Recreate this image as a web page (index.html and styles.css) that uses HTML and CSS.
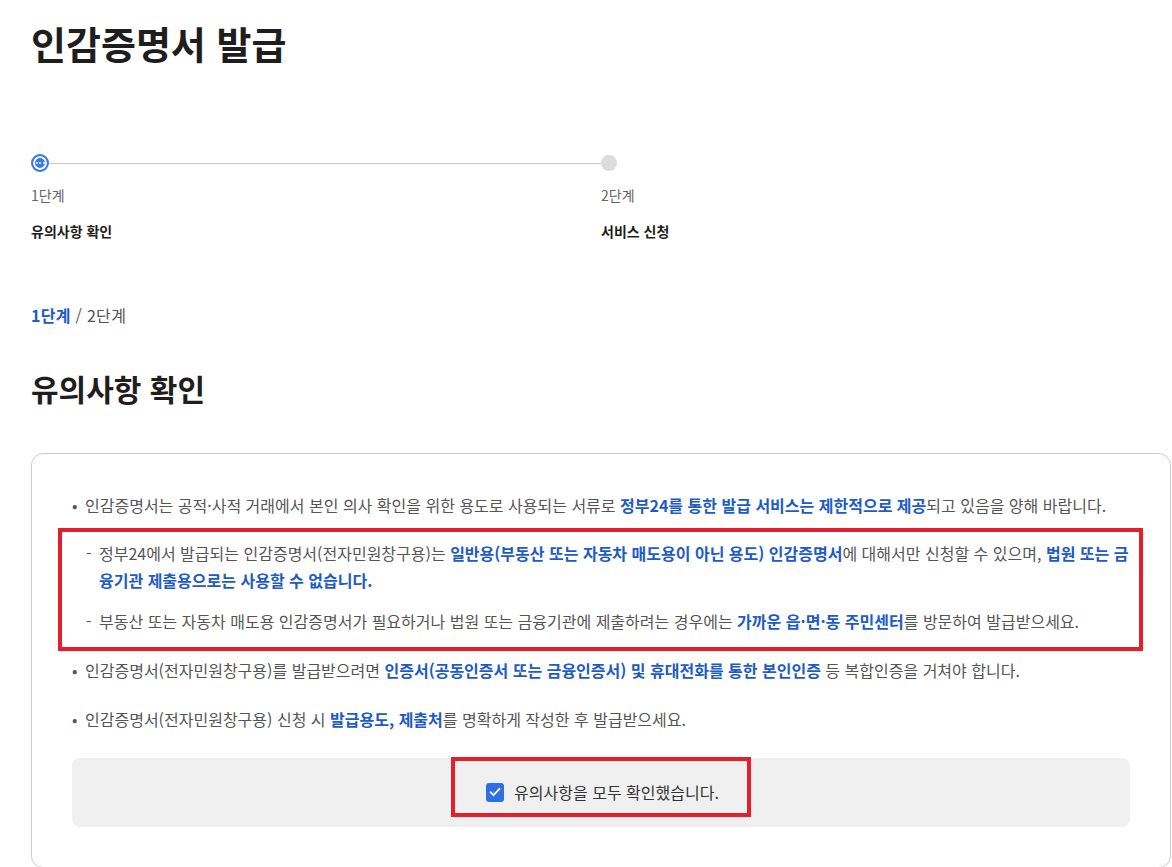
FILE: index.html
```html
<!DOCTYPE html>
<html lang="ko">
<head>
  <meta charset="UTF-8" />
  <meta name="viewport" content="width=device-width, initial-scale=1.0" />
  <title>인감증명서 발급</title>
  <link rel="stylesheet" href="styles.css">
</head>
<body>
  <div class="page">
    <h1 class="page-title">인감증명서 발급</h1>

    <div class="stepper">
      <div class="step current">
        <div class="step-track">
          <span class="step-dot"><i></i><i></i><i></i></span>
          <span class="step-line"></span>
        </div>
        <div class="step-num">1단계</div>
        <div class="step-name">유의사항 확인</div>
      </div>
      <div class="step">
        <div class="step-track">
          <span class="step-dot"></span>
        </div>
        <div class="step-num">2단계</div>
        <div class="step-name">서비스 신청</div>
      </div>
    </div>

    <div class="crumb"><strong>1단계</strong> / 2단계</div>

    <h2 class="section-title">유의사항 확인</h2>

    <div class="card">
      <div class="notes">
        <div class="note">
          <span class="mark">•</span>
          <p>인감증명서는 공적·사적 거래에서 본인 의사 확인을 위한 용도로 사용되는 서류로 <b>정부24를 통한 발급 서비스는 제한적으로 제공</b>되고 있음을 양해 바랍니다.</p>
        </div>
        <div class="sub-box">
          <div class="note">
            <span class="mark">-</span>
            <p>정부24에서 발급되는 인감증명서(전자민원창구용)는 <b>일반용(부동산 또는 자동차 매도용이 아닌 용도) 인감증명서</b>에 대해서만 신청할 수 있으며, <b>법원 또는 금융기관 제출용으로는 사용할 수 없습니다.</b></p>
          </div>
          <div class="note">
            <span class="mark">-</span>
            <p>부동산 또는 자동차 매도용 인감증명서가 필요하거나 법원 또는 금융기관에 제출하려는 경우에는 <b>가까운 읍·면·동 주민센터</b>를 방문하여 발급받으세요.</p>
          </div>
        </div>
        <div class="note">
          <span class="mark">•</span>
          <p>인감증명서(전자민원창구용)를 발급받으려면 <b>인증서(공동인증서 또는 금융인증서) 및 휴대전화를 통한 본인인증</b> 등 복합인증을 거쳐야 합니다.</p>
        </div>
        <div class="note">
          <span class="mark">•</span>
          <p>인감증명서(전자민원창구용) 신청 시 <b>발급용도, 제출처</b>를 명확하게 작성한 후 발급받으세요.</p>
        </div>
      </div>

      <div class="agree">
        <label class="agree-label">
          <span class="check">
            <svg width="12" height="10" viewBox="0 0 12 10"><path d="M1.5 5.2l3 3 6-6.4" fill="none" stroke="#fff" stroke-width="1.8" stroke-linecap="round" stroke-linejoin="round"/></svg>
          </span>
          유의사항을 모두 확인했습니다.
        </label>
      </div>
    </div>
  </div>
</body>
</html>
```

FILE: styles.css
```css
body {
  margin: 0;
  font-family: "Noto Sans CJK KR", "Noto Sans", sans-serif;
  color: #1e1e1e;
  background: #fff;
}
.page {
  width: 1140px;
  padding: 20px 0 0 31px;
}
.page-title {
  margin: 0;
  font-size: 38px;
  line-height: 46px;
  font-weight: 700;
}

/* stepper */
.stepper {
  display: flex;
  margin-top: 88px;
}
.step {
  flex: 1;
}
.step-track {
  display: flex;
  align-items: center;
  height: 18px;
}
.step-dot {
  width: 16px;
  height: 16px;
  border-radius: 50%;
  background: #dcdcdc;
  flex: none;
}
.current .step-dot {
  width: 12px;
  height: 12px;
  border: 2px solid #3a7be8;
  box-shadow: inset 0 0 0 2px #fff;
  background: #3a7be8;
  display: flex;
  align-items: center;
  justify-content: center;
  gap: 1.5px;
  padding: 1px;
}
.step-dot i {
  width: 2px;
  height: 2px;
  border-radius: 50%;
  background: #fff;
}
.step-line {
  flex: 1;
  height: 1px;
  background: #c8c8c8;
}
.step-num {
  margin-top: 13px;
  font-size: 14px;
  line-height: 20px;
  color: #666;
}
.step-name {
  margin-top: 16px;
  font-size: 14px;
  line-height: 20px;
  font-weight: 700;
  color: #1e1e1e;
}

.crumb {
  margin-top: 62px;
  font-size: 16px;
  line-height: 24px;
  color: #555;
  letter-spacing: 0.3px;
}
.crumb strong {
  color: #1d5bc7;
}
.section-title {
  margin: 41px 0 0;
  font-size: 30px;
  line-height: 40px;
  font-weight: 700;
}

/* card */
.card {
  margin-top: 45px;
  border: 1px solid #cccccc;
  border-radius: 12px;
  padding: 38px 40px 40px;
}
.note {
  display: flex;
  font-size: 16px;
  line-height: 27px;
  color: #555;
}
.note p {
  margin: 0;
  flex: 1;
}
.note b {
  color: #1d5bc7;
  font-weight: 700;
}
.mark {
  width: 13px;
  flex: none;
}
.sub-box {
  margin: 9px -13px 6px -14px;
  border: 4px solid #e61e2b;
  padding: 8px 9px 12px 24px;
}
.sub-box .note + .note {
  margin-top: 14px;
}
.sub-box + .note + .note {
  margin-top: 22px;
}

.agree {
  margin-top: 25px;
  height: 69px;
  background: #f0f0f0;
  border-radius: 8px;
  display: flex;
  justify-content: center;
}
.agree-label {
  margin-top: -1px;
  border: 4px solid #e61e2b;
  padding: 10px 28px 0 31px;
  display: flex;
  align-items: center;
  box-sizing: border-box;
  height: 60px;
  gap: 10px;
  font-size: 16px;
  color: #333;
}
.check {
  width: 18px;
  height: 19px;
  border-radius: 3px;
  background: #2f6fe4;
  display: flex;
  align-items: center;
  justify-content: center;
}
```
